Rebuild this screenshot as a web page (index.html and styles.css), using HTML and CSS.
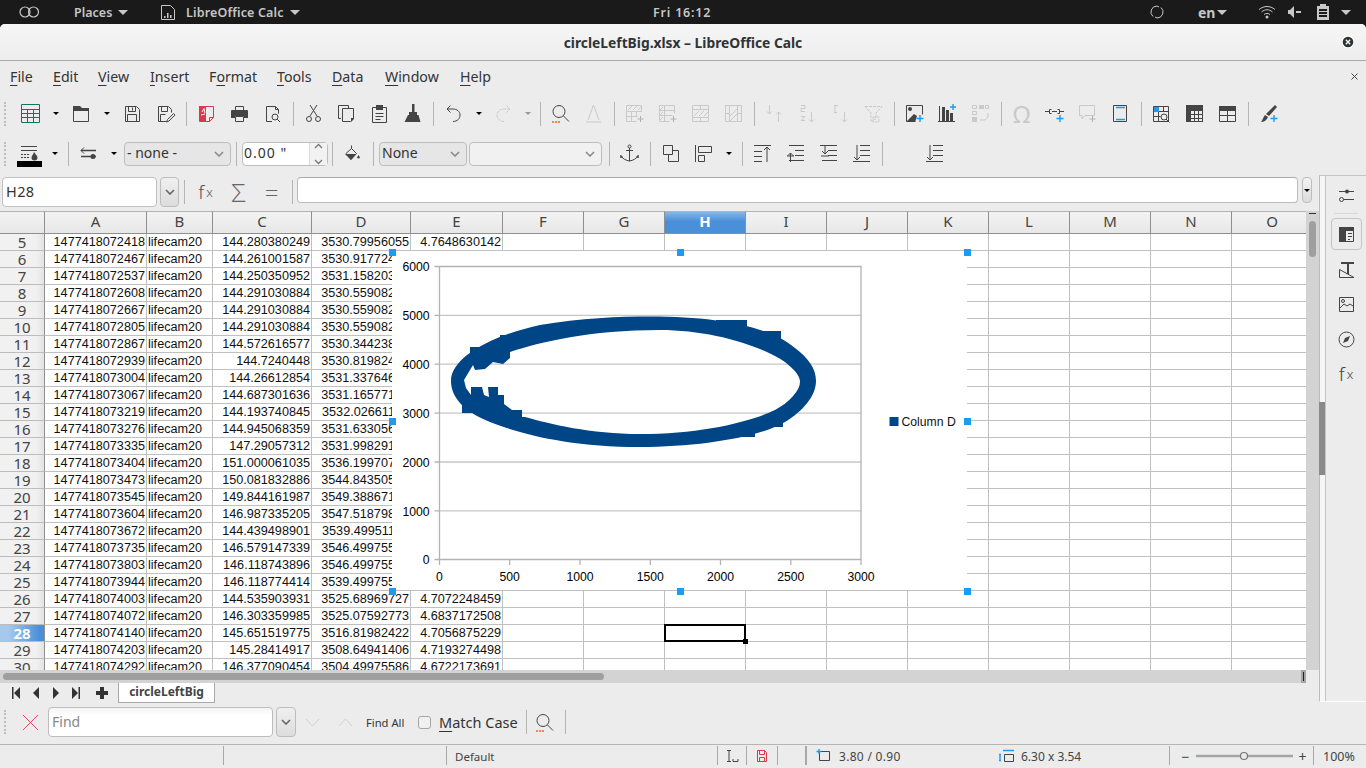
FILE: index.html
```html
<!DOCTYPE html>
<html lang="en">
<head>
    <meta charset="UTF-8">
    <title>circleLeftBig.xlsx - LibreOffice Calc</title>
    <link rel="stylesheet" href="styles.css">
</head>
<body>
    <header class="topbar">
        <svg class="logo" viewBox="0 0 24 12"><circle cx="7" cy="6" r="5"/><circle cx="15.5" cy="6" r="5"/></svg>
        <span class="places">Places</span><i class="caret"></i>
        <svg class="appicon" viewBox="0 0 14 15"><path d="M.5.5h9l4 4v10H.5z"/><path class="solid" d="M3 11h1.5v2H3zM6 8h1.5v5H6zM9 10h1.5v3H9z"/></svg>
        <span class="appname">LibreOffice Calc</span><i class="caret"></i>
        <span class="clock">Fri 16:12</span>
        <svg class="sync" viewBox="0 0 14 14"><path d="M3 11.500A6 6 0 0 1 7 1l2 1M11 2.500A6 6 0 0 1 7 13l-2-1"/></svg>
        <span class="lang">en</span><i class="caret"></i>
        <svg class="wifi" viewBox="0 0 18 14"><path d="M1 4.500c5-4 11-4 16 0M3.500 7c3.500-3 7.500-3 11 0M6 9.500c2-1.500 4-1.500 6 0"/><circle class="solid" cx="9" cy="12" r="1.500"/></svg>
        <svg class="speaker" viewBox="0 0 14 12"><path class="solid" d="M0 4h2l4-4v12L2 8H0zM8 5h5v2H8z"/></svg>
        <svg class="battery" viewBox="0 0 12 16"><path class="solid" d="M3 0h6v2h3v14H0V2h3zM2 5v2h8V5zm0 3v2h8V8zm0 3v2h8v-2z" fill-rule="evenodd"/></svg>
        <i class="caret caret-last"></i>
    </header>

    <div class="window">
        <div class="titlebar">
            <span class="title">circleLeftBig.xlsx – LibreOffice Calc</span>
            <svg class="close" viewBox="0 0 12 12"><circle cx="6" cy="6" r="6"/><path d="M3.800 3.800l4.400 4.400M8.200 3.800L3.800 8.200"/></svg>
        </div>

        <nav class="menubar">
            <a class="menu-file"><u>F</u>ile</a>
            <a class="menu-edit"><u>E</u>dit</a>
            <a class="menu-view"><u>V</u>iew</a>
            <a class="menu-insert"><u>I</u>nsert</a>
            <a class="menu-format">F<u>o</u>rmat</a>
            <a class="menu-tools"><u>T</u>ools</a>
            <a class="menu-data"><u>D</u>ata</a>
            <a class="menu-window"><u>W</u>indow</a>
            <a class="menu-help"><u>H</u>elp</a>
            <svg class="menu-close" viewBox="0 0 7 7"><path d="M.5.5l6 6M6.500.5l-6 6"/></svg>
        </nav>

        <div class="toolbar">
            <i class="grip"></i>
            <span class="btn green"><svg class="ic" viewBox="0 0 19 19"><path d="M.5.5h18v18H.5zM.5 5.500h18M.5 9.500h18M.5 13.500h18M6.500 5.500v13M12.500 5.500v13"/></svg></span><span class="drop"></span>
            <span class="btn"><svg class="ic" viewBox="0 0 19 19"><path class="solid" d="M1 2h7l2 2h7v3H1z"/><path d="M1.500 5.500v12h15v-12"/></svg></span><span class="drop"></span>
            <span class="btn"><svg class="ic" viewBox="0 0 19 19"><path d="M2.500 2.500h11l3 3v12h-14zM5.500 2.500v5h7v-5M4.500 17.500v-7h9v7M9.500 3.500v3"/></svg></span>
            <span class="btn"><svg class="ic" viewBox="0 0 19 19"><path d="M10 17.500H2.500v-15h10l3 3v3M5.500 2.500v5h6v-5M4.500 17.500v-7h5"/><path d="M17.500 9.500l-6 6-1 2.500 2.500-1 6-6z"/></svg></span>
            <i class="sep"></i>
            <span class="btn red"><svg class="ic" viewBox="0 0 19 19"><path class="solid" d="M2 2h7v15H2z"/><path d="M2.500 2.500h14v11l-4 4h-10zM16.500 13.500h-4v4"/><path class="white" d="M5 8l2-3.500L8 9M4 11l4-1"/></svg></span>
            <span class="btn"><svg class="ic" viewBox="0 0 19 19"><path d="M5.500 6v-3.500h8V6M5.500 12.500h8v5h-8z"/><path class="solid" d="M2 6h15a1 1 0 0 1 1 1v7h-4v-2H5v2H1V7a1 1 0 0 1 1-1z"/></svg></span>
            <span class="btn"><svg class="ic" viewBox="0 0 19 19"><path d="M9 17.500H3.500v-15h9l3 3v4M12.500 2.500v3h3"/><circle cx="12" cy="13" r="3"/><path d="M14.200 15.200l2.800 2.800"/></svg></span>
            <i class="sep"></i>
            <span class="btn"><svg class="ic" viewBox="0 0 19 19"><path d="M6 1l7 11M13 1L6 12"/><circle cx="5" cy="15" r="2.500"/><circle cx="14" cy="15" r="2.500"/></svg></span>
            <span class="btn"><svg class="ic" viewBox="0 0 19 19"><path d="M4 14.500H1.500v-13h10V4"/><path d="M5.500 4.500h11v10l-3 3h-8z"/><path class="solid" d="M14 14h3v1l-3 3z"/></svg></span>
            <span class="btn"><svg class="ic" viewBox="0 0 19 19"><path d="M2.500 3.500h14v15h-14zM5.500 9.500h8M5.500 12.500h8M5.500 15.500h5"/><path class="solid" d="M6 1h7v5H6z"/></svg></span>
            <span class="btn"><svg class="ic" viewBox="0 0 19 19"><path class="solid" d="M9 0h2.500v8H9zM6 8h8v3H6zM5 11h10.500l2 7h-16z"/></svg></span>
            <i class="sep"></i>
            <span class="btn"><svg class="ic" viewBox="0 0 19 19"><path d="M9 17.500c4.500 0 7-3 7-6.500s-3-6-7-6H3.500M6.500 1.500l-3.500 3.500 3.500 3.500"/></svg></span><span class="drop drop-undo"></span>
            <span class="btn off"><svg class="ic" viewBox="0 0 19 19"><path stroke-dasharray="3 1" d="M10 17.500c-4.500 0-7-3-7-6.500s3-6 7-6h5.500M12.500 1.500l3.500 3.500-3.500 3.500"/></svg></span><span class="drop drop-off"></span>
            <i class="sep"></i>
            <span class="btn"><svg class="ic" viewBox="0 0 19 19"><circle cx="8" cy="7.500" r="6"/><path d="M12.500 12l5.500 5.500"/><path class="orange" stroke-dasharray="2 1" stroke-width="2" d="M1 18h9"/></svg></span>
            <span class="btn off"><svg class="ic" viewBox="0 0 19 19"><path d="M9.500 1L4 16M9.500 1L15 16M2 18h15"/></svg></span>
            <i class="sep"></i>
            <span class="btn off"><svg class="ic" viewBox="0 0 19 19"><path d="M1.500 1.500h15v6h-15zM1.500 7.500v10h10M1.500 12.500h11M6.500 7.500v10M11.500 7.500v5M3 6l4-4M8 6l4-4M13 6l3-3"/><path class="darkoff" d="M15.500 12v6M12.500 15h6"/></svg></span>
            <span class="btn off"><svg class="ic" viewBox="0 0 19 19"><path d="M1.500 1.500h15v8M1.500 1.500v16h10M6.500 1.500v16M1.500 6.500h15M6.500 11.500h8M1.500 11.500h5M2 6l3-3M2 11l3-3M2 16l3-3"/><path class="darkoff" d="M15.500 12v6M12.500 15h6"/></svg></span>
            <span class="btn off"><svg class="ic" viewBox="0 0 19 19"><path d="M1.500 1.500h16v16h-16zM1.500 5.500h16M1.500 13.500h16M9.500 1.500v4M9.500 13.500v4M3 12l5-5M8 12l5-5M13 12l4-4"/></svg></span>
            <span class="btn off"><svg class="ic" viewBox="0 0 19 19"><path d="M1.500 1.500h16v16h-16zM5.500 1.500v16M13.500 1.500v16M1.500 9.500h4M13.500 9.500h4M6 12l7-7M6 17l7-7"/></svg></span>
            <i class="sep"></i>
            <span class="btn off"><svg class="ic" viewBox="0 0 19 19"><path d="M4.500 1v9M2 7.500L4.500 10 7 7.500M13.500 18V8M11 10.500L13.500 8l2.500 2.500"/></svg></span>
            <span class="btn off"><svg class="ic" viewBox="0 0 19 19"><path d="M13.500 8v10M11 15.500l2.500 2.500 2.500-2.500M3 1.500h4v3H3v3h4M3 12.500h4l-4 4h4"/></svg></span>
            <span class="btn off"><svg class="ic" viewBox="0 0 19 19"><path d="M13.500 8v10M11 15.500l2.500 2.500 2.500-2.500M3 1.500h4M4 1.500v7M3 8.500h3"/></svg></span>
            <span class="btn off"><svg class="ic" viewBox="0 0 19 19"><path stroke-dasharray="3 1" d="M1 2.500h17L12 9v6l-5 2V9zM9 13h6v5H9z"/></svg></span>
            <i class="sep"></i>
            <span class="btn"><svg class="ic" viewBox="0 0 19 19"><path d="M1.500 1.500h16v9M1.500 1.500v16h9"/><circle class="solid" cx="5" cy="5" r="2"/><path class="solid" d="M2 17l7-7 3 2-2 6H2z"/><path class="blue" d="M15 11v7M11.500 14.500h7"/></svg></span>
            <span class="btn"><svg class="ic" viewBox="0 0 19 19"><path class="solid" d="M4 3h3v14H4zM8 6h3v11H8zM12 9h3v8h-3z"/><path d="M0 17.500h17M1.500 2v16"/><path class="blue" d="M15 0v6M12 3h6"/></svg></span>
            <span class="btn off"><svg class="ic" viewBox="0 0 19 19"><path class="solid" d="M8 1h5v4H8zM1 13h5v5H1z"/><path d="M1.500 1.500h4v3h-4zM1.500 7.500h4v3h-4zM14.500 1.500h3v3h-3zM9 16h5l3-3v-4"/></svg></span>
            <i class="sep"></i>
            <span class="btn off omega">Ω</span>
            <span class="btn"><svg class="ic" viewBox="0 0 19 19"><path d="M0 7.500h5M14 7.500h5M6.500 5.500h-2v4h2M12.500 5.500h2v4h-2M7 7.500h5"/><path class="blue" d="M15 11v7M11.500 14.500h7"/></svg></span>
            <span class="btn off"><svg class="ic" viewBox="0 0 19 19"><path d="M1.500 1.500h15v10H7L4 15v-3.500H1.500z"/><path class="darkoff" d="M14.500 12v6M11.500 15h6"/></svg></span>
            <span class="btn"><svg class="ic" viewBox="0 0 19 19"><path d="M2.500 1.500h13v16h-13z"/><path class="blue" d="M5 3.500h9M5 15.500h9"/></svg></span>
            <i class="sep"></i>
            <span class="btn"><svg class="ic" viewBox="0 0 19 19"><path d="M1.500 2.500h15v15h-15zM1.500 7.500h15M1.500 12.500h7M6.500 2.500v15M11.500 2.500v5"/><path class="bluefill" d="M2 3h5v5H2z"/><circle cx="12" cy="13" r="3"/><path d="M14 15l3.500 3.500"/></svg></span>
            <span class="btn"><svg class="ic" viewBox="0 0 19 19"><path class="solid" d="M1 1h17v17H1zM6 7v3h3V7zm4 0v3h3V7zm4 0v3h3V7zM6 11v3h3v-3zm4 0v3h3v-3zm4 0v3h3v-3zM6 15v2h3v-2zm4 0v2h3v-2zm4 0v2h3v-2z" fill-rule="evenodd"/></svg></span>
            <span class="btn"><svg class="ic" viewBox="0 0 19 19"><path class="solid" d="M1 2h17v5H1z"/><path d="M1.500 2.500h16v15h-16zM1.500 11.500h16M9.500 7v10"/></svg></span>
            <i class="sep"></i>
            <span class="btn"><svg class="ic" viewBox="0 0 19 19"><path class="solid" d="M16 1l2 2-8 9-3-2zM6 11l3 2c-1 3-4 5-7 5 2-2 2-5 4-7z"/><path class="blue" d="M15 11v7M11.500 14.500h7"/></svg></span>
        </div>

        <div class="toolbar toolbar-two">
            <i class="grip"></i>
            <span class="btn border-color"><svg viewBox="0 0 25 21" class="ic-wide"><path d="M4 .5h16M4 4.500h16"/><path stroke-dasharray="2 1" d="M4 8.500h9M4 11.500h9"/><path class="solid" d="M17 6c2 3 3.500 4 3.500 5.500a3 3 0 0 1-6 0C14.500 10 16 9 17 6z"/><path class="solid black" d="M0 15h25v6H0z"/></svg></span><span class="drop drop-gap"></span>
            <i class="sep"></i>
            <span class="btn"><svg class="ic" viewBox="0 0 19 19"><path stroke-width="1.500" d="M2 6.500h15M2 12.500h15"/><path d="M5 3.500L2 6.500l3 3"/><circle class="solid" cx="14" cy="12.500" r="2.500"/></svg></span><span class="drop"></span>
            <span class="combo combo-line">- none -</span>
            <i class="sep sep-wide"></i>
            <span class="spin"><span>0.00 "</span><b class="spin-arrows"><svg viewBox="0 0 9 22"><path d="M1 5l3.500-3.500L8 5M1 17l3.500 3.500L8 17"/></svg></b></span>
            <i class="sep"></i>
            <span class="btn"><svg class="ic" viewBox="0 0 19 19"><path class="solid" d="M2 10h11l-5 6z"/><path d="M8.500 1.500v3M3 9.500l5.500-5 5 5-5.500 6z"/><path class="solid" d="M15.500 11l1.500 2.500a1.600 1.600 0 0 1-3 0z"/></svg></span>
            <i class="sep"></i>
            <span class="combo combo-anchor">None</span>
            <span class="combo combo-empty"></span>
            <i class="sep sep-push"></i>
            <span class="btn"><svg class="ic" viewBox="0 0 19 19"><circle cx="9.500" cy="2.500" r="1.500"/><path d="M9.500 4v13M6 6.500h7M1 11.500c1 3 5 5 8.500 5.500 3.500-.5 7.500-2.500 8.500-5.500M1 11l-.5 2.500L3 13M18 11l.5 2.500L16 13"/></svg></span>
            <i class="sep"></i>
            <span class="btn"><svg class="ic" viewBox="0 0 19 19"><path d="M2.500 1.500h9v9h-9zM11.500 6.500h6v11h-10v-7"/></svg></span>
            <span class="btn"><svg class="ic" viewBox="0 0 19 19"><path d="M1.500 1v17M4.500 2.500h13v6h-13zM4.500 11.500h6v6h-6z"/></svg></span><span class="drop"></span>
            <i class="sep"></i>
            <span class="btn"><svg class="ic" viewBox="0 0 19 19"><path d="M1 1.500h17M1 7.500h8M1 12.500h8M1 17.500h8M14 18V3M11 6l3-3 3 3"/></svg></span>
            <span class="btn"><svg class="ic" viewBox="0 0 19 19"><path d="M3 1.500h15M9 6.500h9M9 11.500h9M3 16.500h15M4.500 18V9M1.500 12l3-3 3 3M1 12h7"/></svg></span>
            <span class="btn"><svg class="ic" viewBox="0 0 19 19"><path d="M1 1.500h17M9 6.500h9M9 11.500h9M3 16.500h15M6 1v9M3 7l3 3 3-3M2 12h8"/></svg></span>
            <span class="btn"><svg class="ic" viewBox="0 0 19 19"><path d="M8 1.500h10M8 6.500h10M8 11.500h10M1 17.500h17M5 1v15M2 13l3 3 3-3"/></svg></span>
            <i class="sep"></i>
            <span class="btn btn-push"><svg class="ic" viewBox="0 0 19 19"><path d="M8 1.500h10M8 6.500h10M8 11.500h10M1 17.500h17M5 1v15M2 13l3 3 3-3"/></svg></span>
        </div>

        <div class="main">
            <div class="sheet">
                <div class="formula">
                    <span class="namebox">H28</span>
                    <span class="combo-btn"><svg viewBox="0 0 10 6"><path d="M1 1l4 4 4-4"/></svg></span>
                    <i class="sep sep-formula"></i>
                    <span class="btn fx">f<sub>x</sub></span>
                    <span class="btn sum">Σ</span>
                    <span class="btn equals">=</span>
                    <i class="sep sep-formula-end"></i>
                    <span class="formula-input"></span>
                    <span class="formula-drop"><i></i></span>
                </div>

                <div class="gridrow">
                    <div class="cells">
                        <table class="grid">
                            <colgroup>
                                <col class="c-head"><col class="c-a"><col class="c-b"><col class="c-c"><col class="c-d"><col class="c-e">
                                <col class="c-n"><col class="c-n"><col class="c-n"><col class="c-n"><col class="c-n"><col class="c-n"><col class="c-n"><col class="c-n"><col class="c-n"><col class="c-n">
                            </colgroup>
                            <thead>
                                <tr><th></th><th>A</th><th>B</th><th>C</th><th>D</th><th>E</th><th>F</th><th>G</th><th class="sel">H</th><th>I</th><th>J</th><th>K</th><th>L</th><th>M</th><th>N</th><th>O</th></tr>
                            </thead>
                            <tbody>
                                <tr><th>5</th><td>1477418072418</td><td class="s">lifecam20</td><td>144.280380249</td><td>3530.79956055</td><td>4.7648630142</td><td></td><td></td><td></td><td></td><td></td><td></td><td></td><td></td><td></td><td></td></tr>
                                <tr><th>6</th><td>1477418072467</td><td class="s">lifecam20</td><td>144.261001587</td><td>3530.91772461</td><td></td><td></td><td></td><td></td><td></td><td></td><td></td><td></td><td></td><td></td><td></td></tr>
                                <tr><th>7</th><td>1477418072537</td><td class="s">lifecam20</td><td>144.250350952</td><td>3531.15820313</td><td></td><td></td><td></td><td></td><td></td><td></td><td></td><td></td><td></td><td></td><td></td></tr>
                                <tr><th>8</th><td>1477418072608</td><td class="s">lifecam20</td><td>144.291030884</td><td>3530.55908203</td><td></td><td></td><td></td><td></td><td></td><td></td><td></td><td></td><td></td><td></td><td></td></tr>
                                <tr><th>9</th><td>1477418072667</td><td class="s">lifecam20</td><td>144.291030884</td><td>3530.55908203</td><td></td><td></td><td></td><td></td><td></td><td></td><td></td><td></td><td></td><td></td><td></td></tr>
                                <tr><th>10</th><td>1477418072805</td><td class="s">lifecam20</td><td>144.291030884</td><td>3530.55908203</td><td></td><td></td><td></td><td></td><td></td><td></td><td></td><td></td><td></td><td></td><td></td></tr>
                                <tr><th>11</th><td>1477418072867</td><td class="s">lifecam20</td><td>144.572616577</td><td>3530.34423828</td><td></td><td></td><td></td><td></td><td></td><td></td><td></td><td></td><td></td><td></td><td></td></tr>
                                <tr><th>12</th><td>1477418072939</td><td class="s">lifecam20</td><td>144.7240448</td><td>3530.81982422</td><td></td><td></td><td></td><td></td><td></td><td></td><td></td><td></td><td></td><td></td><td></td></tr>
                                <tr><th>13</th><td>1477418073004</td><td class="s">lifecam20</td><td>144.26612854</td><td>3531.33764648</td><td></td><td></td><td></td><td></td><td></td><td></td><td></td><td></td><td></td><td></td><td></td></tr>
                                <tr><th>14</th><td>1477418073067</td><td class="s">lifecam20</td><td>144.687301636</td><td>3531.16577148</td><td></td><td></td><td></td><td></td><td></td><td></td><td></td><td></td><td></td><td></td><td></td></tr>
                                <tr><th>15</th><td>1477418073219</td><td class="s">lifecam20</td><td>144.193740845</td><td>3532.02661133</td><td></td><td></td><td></td><td></td><td></td><td></td><td></td><td></td><td></td><td></td><td></td></tr>
                                <tr><th>16</th><td>1477418073276</td><td class="s">lifecam20</td><td>144.945068359</td><td>3531.63305664</td><td></td><td></td><td></td><td></td><td></td><td></td><td></td><td></td><td></td><td></td><td></td></tr>
                                <tr><th>17</th><td>1477418073335</td><td class="s">lifecam20</td><td>147.29057312</td><td>3531.99829102</td><td></td><td></td><td></td><td></td><td></td><td></td><td></td><td></td><td></td><td></td><td></td></tr>
                                <tr><th>18</th><td>1477418073404</td><td class="s">lifecam20</td><td>151.000061035</td><td>3536.19970703</td><td></td><td></td><td></td><td></td><td></td><td></td><td></td><td></td><td></td><td></td><td></td></tr>
                                <tr><th>19</th><td>1477418073473</td><td class="s">lifecam20</td><td>150.081832886</td><td>3544.84350586</td><td></td><td></td><td></td><td></td><td></td><td></td><td></td><td></td><td></td><td></td><td></td></tr>
                                <tr><th>20</th><td>1477418073545</td><td class="s">lifecam20</td><td>149.844161987</td><td>3549.38867188</td><td></td><td></td><td></td><td></td><td></td><td></td><td></td><td></td><td></td><td></td><td></td></tr>
                                <tr><th>21</th><td>1477418073604</td><td class="s">lifecam20</td><td>146.987335205</td><td>3547.51879883</td><td></td><td></td><td></td><td></td><td></td><td></td><td></td><td></td><td></td><td></td><td></td></tr>
                                <tr><th>22</th><td>1477418073672</td><td class="s">lifecam20</td><td>144.439498901</td><td>3539.49951172</td><td></td><td></td><td></td><td></td><td></td><td></td><td></td><td></td><td></td><td></td><td></td></tr>
                                <tr><th>23</th><td>1477418073735</td><td class="s">lifecam20</td><td>146.579147339</td><td>3546.49975586</td><td></td><td></td><td></td><td></td><td></td><td></td><td></td><td></td><td></td><td></td><td></td></tr>
                                <tr><th>24</th><td>1477418073803</td><td class="s">lifecam20</td><td>146.118743896</td><td>3546.49975586</td><td></td><td></td><td></td><td></td><td></td><td></td><td></td><td></td><td></td><td></td><td></td></tr>
                                <tr><th>25</th><td>1477418073944</td><td class="s">lifecam20</td><td>146.118774414</td><td>3539.49975586</td><td></td><td></td><td></td><td></td><td></td><td></td><td></td><td></td><td></td><td></td><td></td></tr>
                                <tr><th>26</th><td>1477418074003</td><td class="s">lifecam20</td><td>144.535903931</td><td>3525.68969727</td><td>4.7072248459</td><td></td><td></td><td></td><td></td><td></td><td></td><td></td><td></td><td></td><td></td></tr>
                                <tr><th>27</th><td>1477418074072</td><td class="s">lifecam20</td><td>146.303359985</td><td>3525.07592773</td><td>4.6837172508</td><td></td><td></td><td></td><td></td><td></td><td></td><td></td><td></td><td></td><td></td></tr>
                                <tr><th class="sel-row">28</th><td>1477418074140</td><td class="s">lifecam20</td><td>145.651519775</td><td>3516.81982422</td><td>4.7056875229</td><td></td><td></td><td class="cursor"><i class="cursor-box"></i><i class="cursor-handle"></i></td><td></td><td></td><td></td><td></td><td></td><td></td><td></td></tr>
                                <tr><th>29</th><td>1477418074203</td><td class="s">lifecam20</td><td>145.28414917</td><td>3508.64941406</td><td>4.7193274498</td><td></td><td></td><td></td><td></td><td></td><td></td><td></td><td></td><td></td><td></td></tr>
                                <tr><th>30</th><td>1477418074292</td><td class="s">lifecam20</td><td>146.377090454</td><td>3504.49975586</td><td>4.6722173691</td><td></td><td></td><td></td><td></td><td></td><td></td><td></td><td></td><td></td><td></td></tr>
                            </tbody>
                        </table>

                        <!-- chart coordinates are the same as screen coordinates -->
                        <div class="chart">
                            <svg class="chart-svg" viewBox="392 251 575 339">
                                <path class="gridline" d="M439 315.400H861M439 364.200H861M439 413.100H861M439 462H861M439 510.800H861"/>
                                <path class="axis" d="M434.500 266.500H861V565M439.500 266.500V565M434.500 315.400H439M434.500 364.200H439M434.500 413.100H439M434.500 462H439M434.500 510.800H439M434.500 559.500H861M509.700 559.500V565M580 559.500V565M650.300 559.500V565M720.500 559.500V565M790.800 559.500V565"/>
                                <g class="ylabels">
                                    <text x="429.500" y="271">6000</text>
                                    <text x="429.500" y="320">5000</text>
                                    <text x="429.500" y="369">4000</text>
                                    <text x="429.500" y="418">3000</text>
                                    <text x="429.500" y="466.500">2000</text>
                                    <text x="429.500" y="515.500">1000</text>
                                    <text x="429.500" y="564">0</text>
                                </g>
                                <g class="xlabels">
                                    <text x="439.500" y="581">0</text>
                                    <text x="509.700" y="581">500</text>
                                    <text x="580" y="581">1000</text>
                                    <text x="650.300" y="581">1500</text>
                                    <text x="720.500" y="581">2000</text>
                                    <text x="790.800" y="581">2500</text>
                                    <text x="861" y="581">3000</text>
                                </g>
                                <!-- the series is thousands of square markers, traced here as one band -->
                                <path class="series" fill-rule="evenodd" d="M451 381C451 358 490 336 540 325C580 318 620 316.500 650 316.500C720 316.500 770 327 795 348C808 358 816 368 816 381C816 396 803 411 785 422C760 437 700 447 640 447C570 447 520 434 490 422C465 412 451 398 451 381ZM464 380L473 365L475 370L485 369L493 362L503 364L510 358L510 352C540 342 590 330 660 330C710 330 760 345 785 362C795 370 800 376 800 382C800 390 790 402 775 410C750 422 700 434 640 434C590 434 550 424 525 417L522 417L522 410L512 410L504 404L504 395L498 395L498 387L488 387L489 397L484 395L482 387L471 387L471 395L466 388Z"/>
                                <path class="series" d="M716 320h31v8h-31zM755 331h26v8h-26zM500 335h14v8h-14zM728 430h27v7h-27zM755 420h28v7h-28zM470 347h16v8h-16zM462 404h14v9h-14z"/>
                                <path class="series" d="M889.500 417h9v9h-9z"/>
                                <text class="legend" x="901.500" y="426">Column D</text>
                                <path class="handles" d="M389 249h7v7h-7zM677 249h7v7h-7zM964 249h7v7h-7zM389 418h7v7h-7zM964 418h7v7h-7zM389 588h7v7h-7zM677 588h7v7h-7zM964 588h7v7h-7z"/>
                            </svg>
                        </div>
                    </div>
                    <div class="vscroll"><i class="vscroll-mark"></i><i class="vscroll-thumb"></i></div>
                </div>

                <div class="hscroll"><i class="hscroll-thumb"></i><i class="hscroll-mark"></i></div>

                <div class="tabbar">
                    <svg class="nav" viewBox="0 0 10 12"><path d="M1 0h1.500v12H1zM9 0v12L3 6z"/></svg>
                    <svg class="nav" viewBox="0 0 10 12"><path d="M8 0v12L2 6z"/></svg>
                    <svg class="nav" viewBox="0 0 10 12"><path d="M2 0v12l6-6z"/></svg>
                    <svg class="nav" viewBox="0 0 10 12"><path d="M1 0v12l6-6zM7.500 0H9v12H7.500z"/></svg>
                    <svg class="nav nav-add" viewBox="0 0 12 12"><path d="M4 0h4v4h4v4H8v4H4V8H0V4h4z"/></svg>
                    <span class="tab">circleLeftBig</span>
                </div>
            </div>

            <aside class="sidebar">
                <div class="strip"><i class="strip-grip"></i></div>
                <div class="deck">
                    <span class="deck-btn deck-first"><svg class="ic" viewBox="0 0 19 19"><path d="M2 5.500h15M6.500 13.500H17"/><circle class="solid" cx="10" cy="5.500" r="2"/><circle cx="4.500" cy="13.500" r="2"/></svg></span>
                    <i class="deck-sep"></i>
                    <span class="deck-btn deck-on"><svg class="ic" viewBox="0 0 19 19"><path class="solid" d="M2 2h15v4H2zM2 6h7v11H2z"/><path d="M2.500 2.500h14v14h-14zM11 8.500h4M11 11.500h4M11 14.500h2"/></svg></span>
                    <span class="deck-btn"><svg class="ic" viewBox="0 0 19 19"><path class="solid" d="M4 2h13v2h-5v10h-2V4H4z"/><path d="M2.500 9.500v8H17z"/></svg></span>
                    <span class="deck-btn"><svg class="ic" viewBox="0 0 19 19"><path d="M2.500 2.500h14v14h-14zM3 13l4-4 3 2 3-2 3 2"/><circle cx="6" cy="6" r="1.500"/></svg></span>
                    <span class="deck-btn"><svg class="ic" viewBox="0 0 19 19"><circle cx="9.500" cy="9.500" r="7.500"/><path class="solid" d="M13 6l-2 5-5 2 2-5z"/></svg></span>
                    <span class="deck-btn fx fx-side">f<sub>x</sub></span>
                </div>
            </aside>
        </div>

        <div class="findbar">
            <i class="grip grip-find"></i>
            <svg class="find-close" viewBox="0 0 18 18"><path d="M1 1l16 16M17 1L1 17"/></svg>
            <span class="find-input">Find</span>
            <span class="combo-btn find-drop"><svg viewBox="0 0 10 6"><path d="M1 1l4 4 4-4"/></svg></span>
            <svg class="find-nav" viewBox="0 0 15 9"><path d="M1 1l6.500 7L14 1"/></svg>
            <svg class="find-nav" viewBox="0 0 15 9"><path d="M1 8l6.500-7L14 8"/></svg>
            <span class="find-all">Find All</span>
            <i class="checkbox"></i>
            <span class="match"><u>M</u>atch Case</span>
            <i class="sep sep-find"></i>
            <span class="btn btn-find"><svg class="ic" viewBox="0 0 19 19"><circle cx="8" cy="7.500" r="6"/><path d="M12.500 12l5.500 5.500"/><path class="orange" stroke-dasharray="2 1" stroke-width="2" d="M1 18h9"/></svg></span>
            <i class="sep"></i>
        </div>

        <footer class="statusbar">
            <span class="seg seg-1"></span>
            <span class="seg seg-2"></span>
            <span class="seg seg-3">Default</span>
            <span class="seg seg-4"><svg class="st-ic" viewBox="0 0 14 14"><path d="M2 1.500h4M2 12.500h4M4 1.500v11M8 12.500h5M8 10v2.500M13 10v2.500"/></svg></span>
            <span class="seg seg-5"><svg class="st-ic st-red" viewBox="0 0 14 14"><path d="M2.500 1.500h7l2 2v9h-9zM4.500 1.500v4h5v-4M4.500 12.500v-4h5v4"/></svg></span>
            <span class="seg seg-6"></span>
            <span class="seg seg-7">
                <svg class="st-ic st-pos" viewBox="0 0 14 14"><path d="M3.500 2.500h10v9h-10z"/><path class="blue" d="M3 0v5M.5 2.500h5"/></svg>
                <span class="st-pos-text">3.80 / 0.90</span>
                <svg class="st-ic st-size" viewBox="0 0 16 14"><path d="M5.500 5.500h9v7h-9z"/><path class="blue" d="M4 1.500h11M1 5.500v6M0 5.500h2M0 11.500h2"/></svg>
                <span>6.30 x 3.54</span>
            </span>
            <span class="seg seg-8">
                <span class="zoom-sign">−</span>
                <svg class="zoom-slider" viewBox="0 0 97 12"><path d="M0 6h97"/><circle cx="48" cy="6" r="3.500"/></svg>
                <span class="zoom-sign">+</span>
            </span>
            <span class="seg seg-9">100%</span>
        </footer>
    </div>
</body>
</html>
```

FILE: styles.css
```css
* {
    box-sizing: border-box;
}
html, body {
    margin: 0;
    padding: 0;
    width: 1366px;
    height: 768px;
    overflow: hidden;
}
body {
    font-family: "Noto Sans", sans-serif;
    background: #1a1a1a;
    color: #3d3d3d;
}
i {
    display: block;
    font-style: normal;
}

/* gnome top bar */
.topbar {
    height: 24px;
    background: #1a1a1a;
    color: #c6c6c6;
    font-size: 12.5px;
    font-weight: 600;
    display: flex;
    align-items: center;
}
.topbar > * {
    flex: none;
}
.topbar svg {
    fill: none;
    stroke: #c8c8c8;
}
.topbar .solid {
    fill: #c8c8c8;
    stroke: none;
}
.logo { width: 24px; height: 12px; margin-left: 18px; stroke-width: 1.2; }
.places { margin-left: 32px; width: 44px; }
.caret {
    width: 0;
    height: 0;
    border-top: 5px solid #c8c8c8;
    border-left: 5px solid transparent;
    border-right: 5px solid transparent;
}
.appicon { width: 14px; height: 15px; margin-left: 33px; }
.appname { margin-left: 11px; width: 104px; letter-spacing: .15px; white-space: nowrap; }
.clock { margin-left: 353px; width: 60px; letter-spacing: .8px; white-space: nowrap; }
.sync { width: 14px; height: 14px; margin-left: 437px; }
.lang { margin-left: 34px; width: 19px; font-size: 14px; font-weight: 700; }
.wifi { width: 18px; height: 14px; margin-left: 31px; }
.speaker { width: 14px; height: 12px; margin-left: 12px; }
.battery { width: 12px; height: 16px; margin-left: 15px; }
.caret-last { margin-left: 12px; }

/* window */
.window {
    height: 744px;
    background: #ececec;
    border-radius: 5px 5px 0 0;
    display: flex;
    flex-direction: column;
}
.titlebar {
    height: 37px;
    flex: none;
    position: relative;
    background: linear-gradient(#f6f6f6, #ededed);
    border-bottom: 1px solid #a9a9a9;
    border-radius: 5px 5px 0 0;
    display: flex;
    align-items: center;
    justify-content: center;
}
.title {
    font-size: 13.8px;
    font-weight: 700;
    color: #2e3436;
}
.close {
    position: absolute;
    right: 12px;
    top: 12px;
    width: 12px;
    height: 12px;
    fill: #2e3436;
    stroke: #fff;
    stroke-width: 1.3;
}
.menubar {
    height: 32px;
    flex: none;
    display: flex;
    align-items: center;
    padding-bottom: 1px;
    font-size: 14.2px;
    color: #333;
}
.menubar u {
    text-underline-offset: 3px;
}
.menu-file { margin-left: 10px; width: 43px; }
.menu-edit { width: 45px; }
.menu-view { width: 52px; }
.menu-insert { width: 59px; }
.menu-format { width: 68px; }
.menu-tools { width: 55px; }
.menu-data { width: 53px; }
.menu-window { width: 75px; }
.menu-help { width: 40px; }
.menu-close {
    width: 7px;
    height: 7px;
    margin-left: 851px;
    fill: none;
    stroke: #444;
}

/* toolbars */
.toolbar {
    height: 41px;
    flex: none;
    display: flex;
    align-items: center;
}
.toolbar-two {
    padding-bottom: 2px;
}
.grip {
    width: 2px;
    height: 24px;
    margin-left: 4px;
    margin-right: 8px;
    border-left: 2px dotted #bdbdbd;
}
.toolbar-two .grip { margin-right: 11px; }
.btn {
    width: 33px;
    height: 24px;
    flex: none;
    display: flex;
    align-items: center;
    justify-content: center;
    color: #444;
}
.ic {
    width: 19px;
    height: 19px;
    fill: none;
    stroke: currentColor;
    stroke-width: 1;
}
.ic-wide {
    width: 25px;
    height: 21px;
    fill: none;
    stroke: #444;
    margin-top: 5px;
}
.solid { fill: currentColor; stroke: none; }
.black { fill: #000; }
.white { stroke: #fff; }
.blue { stroke: #1e9bf0; stroke-width: 1.4; fill: none; }
.bluefill { fill: #1e9bf0; stroke: none; }
.orange { stroke: #f2825a; }
.darkoff { stroke: #b0b0b0; }
.green { color: #10775a; }
.red { color: #d83a4c; }
.off { color: #c9c9c9; }
.omega {
    font-size: 24px;
    line-height: 24px;
}
.drop {
    width: 18px;
    flex: none;
    display: flex;
    justify-content: center;
}
.drop::before {
    content: "";
    width: 0;
    height: 0;
    border-top: 3px solid #000;
    border-left: 3px solid transparent;
    border-right: 3px solid transparent;
}
.drop-undo { width: 17px; }
.drop-off { width: 16px; }
.drop-off::before {
    border-top-color: #999;
}
.drop-gap { margin-left: 4px; }
.sep {
    width: 8px;
    height: 24px;
    flex: none;
    background: linear-gradient(#b4b4b4, #b4b4b4) center / 1px 100% no-repeat;
}
.sep-wide { width: 11px; }
.sep-push { margin-left: 3px; }
.btn-push { margin-left: 32px; }
.border-color { width: 25px; }
.combo, .spin {
    height: 24px;
    flex: none;
    display: flex;
    align-items: center;
    padding-bottom: 2px;
    border: 1px solid #bdbdbd;
    border-radius: 4px;
    font-size: 14px;
    color: #333;
}
.combo {
    padding-left: 2px;
    background-color: #e6e6e6;
    background-image: url("data:image/svg+xml,%3Csvg xmlns='http://www.w3.org/2000/svg' width='10' height='6'%3E%3Cpath d='M1 1l4 4 4-4' fill='none' stroke='%23888' stroke-width='1.500'/%3E%3C/svg%3E");
    background-repeat: no-repeat;
    background-position: right 6px center;
}
.combo-line { width: 107px; margin-left: 1px; }
.combo-anchor { width: 88px; margin-left: 2px; }
.combo-empty { width: 133px; margin-left: 2px; background-color: #f1f1f1; }
.spin {
    width: 86px;
    background: #fff;
    padding-left: 1px;
    justify-content: space-between;
    letter-spacing: 1px;
    padding-bottom: 0;
}
.spin > span {
    padding-bottom: 2px;
}
.spin-arrows {
    width: 18px;
    height: 22px;
    background: #f2f2f2;
    border-left: 1px solid #dcdcdc;
    display: flex;
    justify-content: center;
}
.spin-arrows svg {
    width: 9px;
    height: 22px;
    fill: none;
    stroke: #777;
    stroke-width: 1.3;
}

/* main area */
.main {
    height: 531px;
    flex: none;
    display: flex;
}
.sheet {
    width: 1319px;
    flex: none;
    display: flex;
    flex-direction: column;
}
.formula {
    height: 36px;
    flex: none;
    display: flex;
    align-items: flex-start;
    padding-top: 2px;
}
.namebox {
    width: 155px;
    height: 30px;
    margin-left: 2px;
    padding-left: 3px;
    background: #fff;
    border: 1px solid #c0c0c0;
    border-radius: 4px;
    font-size: 14.5px;
    line-height: 27px;
    letter-spacing: .4px;
    color: #333;
}
.combo-btn {
    width: 19px;
    height: 30px;
    margin-left: 3px;
    background: linear-gradient(#f0f0f0, #dcdcdc);
    border: 1px solid #bdbdbd;
    border-radius: 4px;
    display: flex;
    align-items: center;
    justify-content: center;
}
.combo-btn svg {
    width: 10px;
    height: 6px;
    fill: none;
    stroke: #666;
    stroke-width: 1.6;
}
.sep-formula { width: 10px; margin-top: 3px; }
.sep-formula-end { margin-top: 3px; }
.formula .btn { height: 30px; }
.fx {
    font-size: 19px;
    font-weight: 300;
    color: #555;
}
.fx sub {
    font-size: 13px;
    vertical-align: -3px;
    margin-left: 2px;
    line-height: 0;
}
.sum {
    font-family: "Open Sans", sans-serif;
    font-size: 26px;
    font-weight: 300;
    color: #666;
}
.equals {
    font-family: "Open Sans", sans-serif;
    font-size: 24px;
    font-weight: 300;
    color: #666;
}
.formula-input {
    width: 1001px;
    height: 26px;
    margin-left: 1px;
    background: #fff;
    border: 1px solid #bbb;
    border-top-color: #aaa;
    border-radius: 4px;
}
.formula-drop {
    width: 10px;
    height: 26px;
    margin-left: 4px;
    background: linear-gradient(#f2f2f2, #dcdcdc);
    border: 1px solid #bdbdbd;
    border-radius: 4px;
    display: flex;
    align-items: center;
    justify-content: center;
}
.formula-drop i {
    border-top: 3px solid #000;
    border-left: 3px solid transparent;
    border-right: 3px solid transparent;
}
.gridrow {
    height: 459px;
    flex: none;
    display: flex;
}
.cells {
    width: 1306px;
    height: 459px;
    position: relative;
    overflow: hidden;
    background: #fff;
}
.grid {
    width: 1312px;
    table-layout: fixed;
    border-collapse: separate;
    border-spacing: 0;
    font-family: "Liberation Sans", Arial, sans-serif;
    font-size: 12.65px;
    color: #111;
}
.c-head { width: 45px; }
.c-a { width: 102px; }
.c-b { width: 66px; }
.c-c { width: 99px; }
.c-d { width: 99px; }
.c-e { width: 92px; }
.c-n { width: 81px; }
.grid td {
    height: 17px;
    padding: 1px 1px 0 1px;
    text-align: right;
    line-height: 15px;
    white-space: nowrap;
    overflow: hidden;
    border-right: 1px solid #c0c0c0;
    border-bottom: 1px solid #c0c0c0;
}
.grid td.s {
    text-align: left;
}
.grid th {
    padding: 0;
    font-family: "Noto Sans", sans-serif;
    font-weight: 400;
    color: #444;
}
.grid thead th {
    height: 23px;
    padding-bottom: 3px;
    font-size: 15px;
    line-height: 18px;
    background: linear-gradient(#f3f3f3, #e7e7e7);
    border-top: 1px solid #b5b5b5;
    border-right: 1px solid #8f8f8f;
    border-bottom: 1px solid #8f8f8f;
}
.grid thead th.sel {
    background: linear-gradient(#87b6e6, #4a90d9 45%);
    color: #fff;
    font-weight: 700;
}
.grid tbody th {
    height: 17px;
    font-size: 15px;
    line-height: 15px;
    background: linear-gradient(90deg, #f1f1f1 82%, #e3e3e3);
    border-right: 1px solid #8f8f8f;
    border-bottom: 1px solid #bdbdbd;
}
.grid tbody th.sel-row {
    background: linear-gradient(90deg, #a5c8ec 20%, #4a90d9 90%);
    color: #fff;
    font-weight: 700;
}
.grid td.cursor {
    position: relative;
    overflow: visible;
}
.cursor-box {
    position: absolute;
    left: -1px;
    top: -1px;
    right: -1px;
    bottom: -1px;
    border: 2px solid #000;
}
.cursor-handle {
    position: absolute;
    right: -3px;
    bottom: -3px;
    width: 5px;
    height: 5px;
    background: #000;
}

/* chart lies over the cells */
.chart {
    position: absolute;
    left: 392px;
    top: 40px;
    width: 575px;
    height: 339px;
    background: #fff;
}
.chart-svg {
    display: block;
    width: 575px;
    height: 339px;
    overflow: visible;
    font-family: "Liberation Sans", Arial, sans-serif;
    font-size: 12.2px;
}
.gridline {
    fill: none;
    stroke: #c6c6c6;
    stroke-width: 1.3;
}
.axis {
    fill: none;
    stroke: #b3b3b3;
    stroke-width: 1.3;
}
.ylabels { text-anchor: end; }
.xlabels { text-anchor: middle; }
.series { fill: #004586; }
.legend { fill: #111; }
.handles { fill: #1e9bf0; }

/* scrollbars */
.vscroll {
    width: 13px;
    height: 459px;
    flex: none;
    background: #d3d3d3;
    position: relative;
}
.vscroll-mark {
    width: 7px;
    height: 1px;
    margin: 2px 0 0 3px;
    background: #333;
}
.vscroll-thumb {
    width: 7px;
    height: 36px;
    margin: 7px 0 0 3px;
    background: #9f9f9f;
    border-radius: 4px;
}
.hscroll {
    width: 1306px;
    height: 13px;
    flex: none;
    background: #d3d3d3;
    display: flex;
    align-items: center;
    justify-content: space-between;
    padding-left: 3px;
}
.hscroll-thumb {
    width: 601px;
    height: 7px;
    background: #9f9f9f;
    border-radius: 4px;
}
.hscroll-mark {
    width: 5px;
    height: 13px;
    background: linear-gradient(#222, #222) center / 1px 9px no-repeat #a5a5a5;
}

/* sheet tabs */
.tabbar {
    height: 23px;
    flex: none;
    display: flex;
    align-items: flex-start;
}
.nav {
    width: 20px;
    height: 12px;
    margin-top: 4px;
    fill: #333;
}
.nav:first-child { margin-left: 6px; }
.nav-add {
    margin-left: 5px;
    width: 22px;
}
.tab {
    width: 97px;
    height: 20px;
    margin-left: 5px;
    background: #fff;
    border: 1px solid #aaa;
    border-top: none;
    font-size: 12px;
    font-weight: 700;
    line-height: 17px;
    text-align: center;
    color: #444;
}

/* deck on the right */
.sidebar {
    width: 47px;
    height: 527px;
    flex: none;
    display: flex;
    border-top: 1px solid #c4c4c4;
    border-left: 1px solid #bdbdbd;
    border-bottom: 1px solid #fff;
}
.strip {
    width: 6px;
    background: #f6f6f6;
    border-right: 1px solid #c6c6c6;
    padding-top: 226px;
}
.strip-grip {
    width: 6px;
    height: 73px;
    margin-left: -1px;
    background: #8a8a8a;
}
.deck {
    flex: 1;
    display: flex;
    flex-direction: column;
    align-items: center;
    padding-top: 1px;
}
.deck-btn {
    width: 31px;
    height: 32px;
    flex: none;
    margin-bottom: 3px;
    display: flex;
    align-items: center;
    justify-content: center;
    color: #444;
}
.deck-first {
    height: 36px;
    margin-bottom: 0;
}
.deck-sep {
    width: 24px;
    height: 1px;
    margin-bottom: 4px;
    background: #d8d8d8;
}
.deck-on {
    border: 1px solid #c4c4c4;
    border-radius: 4px;
}
.fx-side { font-size: 19px; }

/* find bar */
.findbar {
    height: 38px;
    flex: none;
    display: flex;
    align-items: center;
    padding-bottom: 6px;
}
.grip-find { margin-right: 0; }
.find-close {
    width: 17px;
    height: 17px;
    margin-left: 16px;
    fill: none;
    stroke: #e0404a;
}
.find-input {
    width: 225px;
    height: 30px;
    margin-left: 9px;
    padding-left: 3px;
    background: linear-gradient(#f4f4f4, #fff 25%);
    border: 1px solid #bdbdbd;
    border-radius: 4px;
    font-size: 14px;
    line-height: 27px;
    color: #888;
}
.find-drop {
    width: 20px;
    margin-left: 3px;
}
.find-nav {
    width: 15px;
    height: 9px;
    margin-left: 9px;
    fill: none;
    stroke: #d0d0d0;
}
.find-nav + .find-nav { margin-left: 18px; }
.find-all {
    width: 52px;
    margin-left: 13px;
    font-size: 11.2px;
    white-space: nowrap;
    color: #333;
}
.checkbox {
    width: 13px;
    height: 13px;
    flex: none;
    background: #f0f0f0;
    border: 1px solid #a5a5a5;
    border-radius: 3px;
}
.match {
    width: 87px;
    margin-left: 8px;
    font-size: 14.5px;
    white-space: nowrap;
    color: #333;
}
.match u { text-underline-offset: 3px; }
.sep-find { margin-left: -4px; }
.btn-find { margin-left: -2px; }

/* status bar */
.statusbar {
    height: 24px;
    flex: none;
    display: flex;
    border-top: 1px solid #b5b5b5;
    font-size: 12px;
    color: #444;
}
.seg {
    height: 19px;
    margin-top: 1px;
    padding-top: 1px;
    flex: none;
    display: flex;
    align-items: center;
    border-right: 1px solid #a8a8a8;
}
.seg-1 { width: 224px; }
.seg-2 { width: 223px; }
.seg-3 { width: 271px; padding-left: 8px; font-size: 11.5px; }
.seg-4 { width: 29px; justify-content: center; }
.seg-5 { width: 31px; justify-content: center; }
.seg-6 { width: 29px; border-right-width: 2px; }
.seg-7 { width: 363px; }
.seg-8 { width: 144px; padding-left: 10px; }
.seg-9 { width: 52px; border-right: none; padding-left: 9px; font-size: 12.5px; }
.st-ic {
    width: 14px;
    height: 14px;
    fill: none;
    stroke: #444;
}
.st-red { stroke: #d83a4c; }
.st-pos { margin-left: 9px; }
.st-pos-text { width: 160px; margin-left: 9px; letter-spacing: .3px; }
.st-size { width: 16px; margin-right: 6px; }
.zoom-sign {
    width: 11px;
    font-size: 14px;
    text-align: center;
}
.zoom-slider {
    width: 97px;
    height: 12px;
    margin: 0 4px 0 5px;
    fill: #ececec;
    stroke: #a5a5a5;
    stroke-width: 2.5;
}
.zoom-slider circle {
    stroke: #777;
    stroke-width: 1.2;
}
```
